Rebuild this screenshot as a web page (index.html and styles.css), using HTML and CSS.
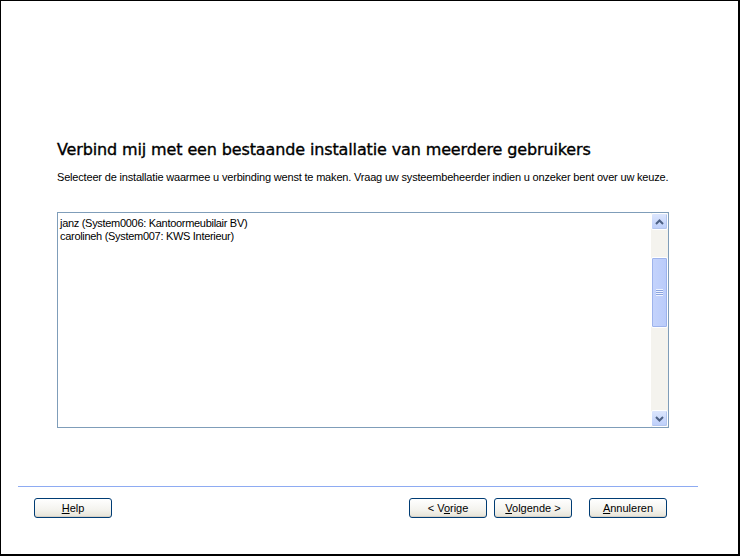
FILE: index.html
```html
<!DOCTYPE html>
<html lang="nl">
<head>
    <meta charset="UTF-8">
    <title>Verbind met installatie</title>
    <link rel="stylesheet" href="styles.css">
</head>
<body>

<div class="window">
    <div class="main">
        <h1 class="title">Verbind mij met een bestaande installatie van meerdere gebruikers</h1>
        <p class="intro">Selecteer de installatie waarmee u verbinding wenst te maken. Vraag uw systeembeheerder indien u onzeker bent over uw keuze.</p>

        <div class="listbox">
            <div class="items">
                <div class="item">janz (System0006: Kantoormeubilair BV)</div>
                <div class="item">carolineh (System007: KWS Interieur)</div>
            </div>
            <div class="scrollbar">
                <div class="sb-button">
                    <svg width="9" height="6" viewBox="0 0 9 6"><path d="M1 5 L4.5 1.5 L8 5" fill="none" stroke="#4d6185" stroke-width="2"/></svg>
                </div>
                <div class="sb-track-top"></div>
                <div class="sb-thumb">
                    <div class="grip"></div>
                </div>
                <div class="sb-track-rest"></div>
                <div class="sb-button">
                    <svg width="9" height="6" viewBox="0 0 9 6"><path d="M1 1 L4.5 4.5 L8 1" fill="none" stroke="#4d6185" stroke-width="2"/></svg>
                </div>
            </div>
        </div>
    </div>

    <div class="footer">
        <div class="separator"></div>
        <div class="buttons">
            <button class="btn"><u>H</u>elp</button>
            <div class="spacer"></div>
            <button class="btn">&lt; V<u>o</u>rige</button>
            <button class="btn next"><u>V</u>olgende &gt;</button>
            <button class="btn cancel"><u>A</u>nnuleren</button>
        </div>
    </div>
</div>

</body>
</html>
```

FILE: styles.css
```css
body {
    margin: 0;
    padding: 0;
    background-color: #fff;
    font-family: "Liberation Sans", Arial, sans-serif;
}

.window {
    width: 740px;
    height: 556px;
    box-sizing: border-box;
    border-top: 1px solid #000;
    border-left: 1px solid #000;
    border-right: 2px solid #000;
    border-bottom: 2px solid #000;
    background-color: #fff;
    display: flex;
    flex-direction: column;
}

.main {
    padding: 140px 0 0 56px;
}

.title {
    margin: 0;
    font-family: "DejaVu Sans", Verdana, sans-serif;
    font-size: 16px;
    line-height: 18px;
    font-weight: normal;
    letter-spacing: -0.13px;
    -webkit-text-stroke: 0.35px #000;
    color: #000;
}

.intro {
    margin: 12px 0 0 0;
    font-size: 11px;
    line-height: 13px;
    letter-spacing: -0.18px;
    color: #000;
}

.listbox {
    margin-top: 28px;
    width: 612px;
    height: 216px;
    box-sizing: border-box;
    border: 1px solid #7f9db9;
    display: flex;
}

.items {
    flex: 1;
    padding: 4px 2px;
    font-size: 11px;
    line-height: 13px;
    letter-spacing: -0.3px;
}

.scrollbar {
    width: 17px;
    background-color: #f4f3ee;
    display: flex;
    flex-direction: column;
}

.sb-button {
    height: 17px;
    box-sizing: border-box;
    border: 1px solid #fff;
    border-radius: 2px;
    background: linear-gradient(#dce6fd, #bccefa);
    box-shadow: inset -1px -1px 0 #b4c6ee;
    display: flex;
    align-items: center;
    justify-content: center;
}

.sb-track-top {
    height: 27px;
}

.sb-thumb {
    height: 71px;
    box-sizing: border-box;
    border: 1px solid #fff;
    border-radius: 2px;
    background: linear-gradient(90deg, #c5d4fc, #b9cbfa);
    box-shadow: 0 0 0 1px #9db3ec inset;
    display: flex;
    align-items: center;
    justify-content: center;
}

.grip {
    width: 7px;
    height: 7px;
    background: repeating-linear-gradient(#eef3ff 0, #eef3ff 1px, #8aa3de 1px, #8aa3de 2px);
}

.sb-track-rest {
    flex: 1;
}

.footer {
    flex: 1;
    display: flex;
    flex-direction: column;
}

.separator {
    margin: 58px 0 0 17px;
    width: 680px;
    height: 1px;
    background-color: #8eabf2;
}

.buttons {
    display: flex;
    margin-top: 11px;
    padding: 0 71px 0 33px;
}

.spacer {
    flex: 1;
}

.btn {
    width: 78px;
    height: 20px;
    box-sizing: border-box;
    padding: 0;
    border: 1px solid #003c74;
    border-radius: 3px;
    background: linear-gradient(#ffffff, #f4f3ee 60%, #e6e3d6);
    box-shadow: inset 0 -1px 0 #d6d0c5;
    font-family: "Liberation Sans", Arial, sans-serif;
    font-size: 11px;
    line-height: 17px;
    color: #000;
    text-align: center;
    cursor: pointer;
}

.btn.next {
    margin-left: 7px;
}

.btn.cancel {
    margin-left: 17px;
}
```
